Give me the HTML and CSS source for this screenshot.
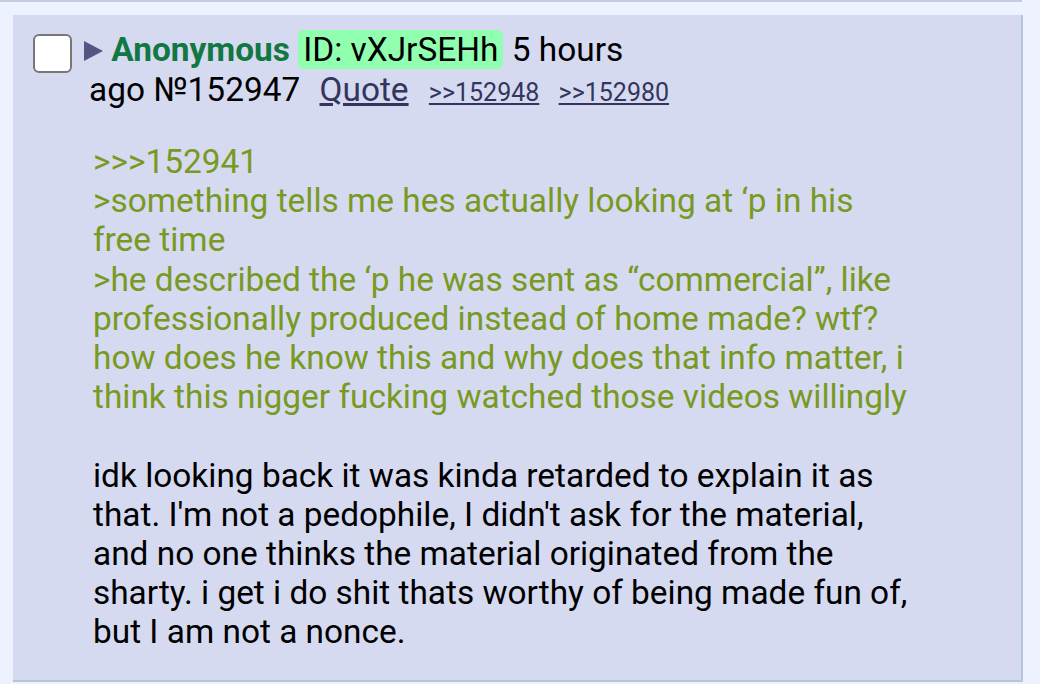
FILE: index.html
```html
<!DOCTYPE html>
<html lang="en">
    <head>
        <title>Thread</title>
        <link rel="stylesheet" href="styles.css">
    </head>
    <body>
        <div class="prev-post"></div>

        <!-- Reply -->
        <div class="post reply" id="p152947">
            <div class="intro">
                <input type="checkbox" class="delete">
                <div class="intro-text">
                    <svg class="arrow" width="19" height="20" viewBox="0 0 19 20"><polygon points="0,0 19,10 0,20" fill="#555584"/></svg>
                    <span class="name">Anonymous</span>
                    <span class="poster-id">ID: vXJrSEHh</span>
                    <span class="time">5 hours</span><br>
                    <span class="time">ago</span>
                    <a class="post-no">№152947</a>
                    <a class="quote-link" href="#">Quote</a>
                    <span class="mentions">
                        <a href="#p152948">&gt;&gt;152948</a>
                        <a href="#p152980">&gt;&gt;152980</a>
                    </span>
                </div>
            </div>
            <div class="body">
                <span class="quote">&gt;&gt;&gt;152941</span><br>
                <span class="quote">&gt;something tells me hes actually looking at ‘p in his free time</span><br>
                <span class="quote">&gt;he described the ‘p he was sent as “commercial”, like professionally produced instead of home made? wtf? how does he know this and why does that info matter, i think this nigger fucking watched those videos willingly</span><br>
                <br>
                idk looking back it was kinda retarded to explain it as that. I'm not a pedophile, I didn't ask for the material, and no one thinks the material originated from the sharty. i get i do shit thats worthy of being made fun of, but I am not a nonce.
            </div>
        </div>
    </body>
</html>
```

FILE: styles.css
```css
/* Page */
body {
    margin: 0;
    background-color: #eef2ff;
    font-family: Roboto, "Noto Sans", sans-serif;
    font-size: 33.4px;
    line-height: 39.2px;
    color: #000;
}

/* Bottom edge of the post above */
.prev-post {
    width: 1022px;
    height: 2px;
    background-color: #c3cde0;
}

/* Reply box */
.post {
    width: 1008px;
    margin: 13px 0 0 13px;
    padding: 15px 0 28px 0;
    background-color: #d6daf0;
    border-right: 2px solid #b7c5d9;
    border-bottom: 2px solid #b7c5d9;
}

/* Header */
.intro {
    display: flex;
    align-items: flex-start;
    padding-left: 20px;
}

.intro-text {
    line-height: 40px;
}

.delete {
    appearance: none;
    flex: none;
    width: 39px;
    height: 39px;
    margin: 4px 17px 0 0;
    box-sizing: border-box;
    background-color: #fff;
    border: 2px solid #777;
    border-radius: 6px;
}

.arrow {
    margin-left: -5px;
}

.name {
    color: #117743;
    font-weight: bold;
}

.poster-id {
    padding: 0 5px;
    background-color: #90ffb0;
    border-radius: 6px;
}

.post-no {
    margin-right: 11px;
}

.quote-link {
    margin-right: 12px;
    color: #34345c;
}

.mentions a {
    margin-right: 11px;
    font-size: 25px;
    color: #34345c;
}

/* Message */
.body {
    margin-top: 29px;
    padding-left: 80px;
    width: 820px;
}

.quote {
    color: #789922;
}
```
